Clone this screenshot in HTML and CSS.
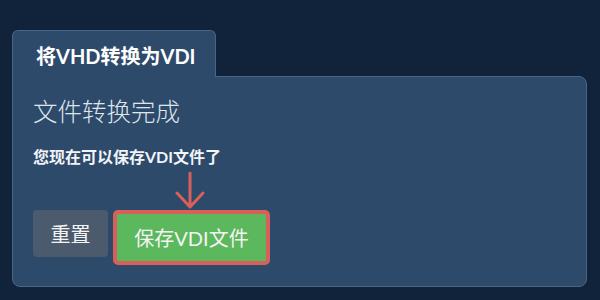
FILE: index.html
```html
<!DOCTYPE html>
<html lang="zh-CN">
<head>
<meta charset="utf-8">
<title>将VHD转换为VDI</title>
<link rel="stylesheet" href="styles.css">
</head>
<body>
<div class="wrap">
  <div class="tab">将VHD转换为VDI</div>
  <div class="panel">
    <h1 class="done">文件转换完成</h1>
    <p class="note">您现在可以保存VDI文件了</p>
    <div class="actions">
      <button class="btn btn-reset">重置</button>
      <button class="btn btn-save">保存VDI文件
        <svg class="arrow" width="30" height="38" viewBox="0 0 30 38" aria-hidden="true">
          <path d="M15 1 V35 M2 21 L15 35 L28 21" fill="none" stroke="#d9605a" stroke-width="3" stroke-linecap="round" stroke-linejoin="round"/>
        </svg>
      </button>
    </div>
  </div>
</div>
</body>
</html>
```

FILE: styles.css
```css
* { box-sizing: border-box; }
html, body { margin: 0; padding: 0; }
body {
  background: #11233a;
  font-family: "Lato", "Noto Sans CJK SC", sans-serif;
  color: #ffffff;
  width: 600px;
  height: 300px;
  overflow: hidden;
}
.wrap {
  padding: 30px 13px 0 12px;
}
.tab {
  position: relative;
  z-index: 1;
  width: 204px;
  height: 47px;
  margin-bottom: -1px;
  padding: 13px 0 0 23px;
  background: #2d4a6a;
  border: 1px solid #4b6584;
  border-bottom: none;
  border-radius: 6px 6px 0 0;
  font-size: 20px;
  line-height: 24px;
  font-weight: 700;
  color: #ffffff;
}
.panel {
  background: #2d4a6a;
  border: 1px solid #4b6584;
  border-radius: 0 8px 8px 8px;
  padding: 21px 20px 21px 20px;
}
.done {
  margin: 0;
  font-size: 24.5px;
  line-height: 28px;
  font-weight: 300;
  color: #dfe5ec;
}
.note {
  margin: 22px 0 0 0;
  font-size: 16px;
  line-height: 18px;
  font-weight: 700;
  color: #f2f4f7;
}
.actions {
  display: flex;
  align-items: flex-start;
  gap: 5px;
  margin-top: 44px;
}
.btn {
  font-family: inherit;
  font-size: 20px;
  line-height: 24px;
  color: #f4f4f4;
  border: none;
  padding: 0;
  cursor: pointer;
}
.btn-reset {
  width: 75px;
  height: 47px;
  background: #4b5b6d;
  border-radius: 4px;
}
.btn-save {
  position: relative;
  width: 157px;
  height: 55px;
  background: #5cb85c;
  border: 4px solid #d9605a;
  border-radius: 5px;
}
.arrow {
  position: absolute;
  left: 58px;
  top: -42px;
}
```
